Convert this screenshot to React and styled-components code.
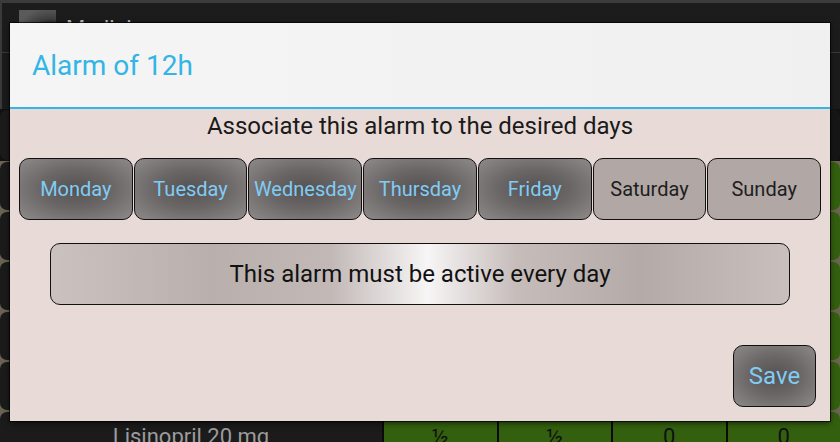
import React from 'react';
import styled, { createGlobalStyle, css } from 'styled-components';

const GlobalStyle = createGlobalStyle`
    * {
        box-sizing: border-box;
    }
    html, body {
        margin: 0;
        padding: 0;
        background: #111;
        font-family: Roboto, 'Liberation Sans', sans-serif;
    }
`;

const days = [
    { label: 'Monday', active: true },
    { label: 'Tuesday', active: true },
    { label: 'Wednesday', active: true },
    { label: 'Thursday', active: true },
    { label: 'Friday', active: true },
    { label: 'Saturday', active: false },
    { label: 'Sunday', active: false },
];

// rows of the medicine table behind the dialog; only the last one peeks out
const rows = [
    { name: '', doses: ['', '', '', ''] },
    { name: '', doses: ['', '', '', ''] },
    { name: '', doses: ['', '', '', ''] },
    { name: '', doses: ['', '', '', ''] },
    { name: '', doses: ['', '', '', ''] },
    { name: 'Lisinopril 20 mg', doses: ['½', '½', '0', '0'] },
];

const App = () => {
    return (
        <>
            <GlobalStyle />
            <Screen>
                <Backdrop>
                    <TopBar>
                        <Thumb />
                        <AppTitle>Medicines</AppTitle>
                    </TopBar>
                    <SubBar />
                    <HeaderRow>
                        <NameCell />
                        <HeadCell />
                        <HeadCell />
                        <HeadCell />
                        <HeadCell />
                    </HeaderRow>
                    {rows.map((row, r) => (
                        <TableRow key={r}>
                            <NameCell>{row.name}</NameCell>
                            {row.doses.map((d, i) => (
                                <DoseCell key={i}>{d}</DoseCell>
                            ))}
                        </TableRow>
                    ))}
                </Backdrop>

                <Dialog>
                    <DialogTitle>Alarm of 12h</DialogTitle>
                    <DialogBody>
                        <Hint>Associate this alarm to the desired days</Hint>
                        <DayRow>
                            {days.map((day) => (
                                <DayButton key={day.label} $active={day.active}>
                                    {day.label}
                                </DayButton>
                            ))}
                        </DayRow>
                        <EveryDayButton>
                            This alarm must be active every day
                        </EveryDayButton>
                        <SaveButton>Save</SaveButton>
                    </DialogBody>
                </Dialog>
            </Screen>
        </>
    );
};

export default App;

const Screen = styled.div`
    position: relative;
    width: 840px;
    height: 442px;
    overflow: hidden;
    background: #141414;
`;

const Backdrop = styled.div`
    display: flex;
    flex-direction: column;
`;

const TopBar = styled.div`
    display: flex;
    align-items: flex-start;
    gap: 10px;
    height: 53px;
    padding: 7px 0 0 17px;
    background: #1c1c1c;
    border-top: 3px solid #3c3c3c;
    border-left: 2px solid #3a3a3a;
    border-bottom: 1px solid #3a3a3a;
`;

const Thumb = styled.div`
    width: 37px;
    height: 37px;
    background: radial-gradient(circle at 85% 95%, #4a4a4a 35%, #151515 42%, #3e3e3e 55%, #5a5a5a 80%);
`;

const AppTitle = styled.div`
    color: #bbb;
    font-size: 22px;
    padding-top: 6px;
`;

const SubBar = styled.div`
    height: 56px;
    background: #1b1b1b;
    border-left: 2px solid #3a3a3a;
`;

const TableRow = styled.div`
    display: grid;
    grid-template-columns: 382px repeat(4, 1fr);
    height: 50px;
    background: #6a6352;
`;

const HeaderRow = styled(TableRow)`
    height: 52px;
    background: #111;
`;

const cellBase = css`
    display: flex;
    align-items: center;
    justify-content: center;
    border-radius: 7px;
    font-size: 22px;
`;

const NameCell = styled.div`
    ${cellBase};
    background: #1b1b1b;
    color: #9c9c9c;
    margin: 1px 0;
`;

const HeadCell = styled.div`
    ${cellBase};
    background: #161616;
    border-left: 2px solid #000;
`;

const DoseCell = styled.div`
    ${cellBase};
    background: #33600e;
    color: #111;
    border-left: 2px solid #0a0a0a;
    margin: 1px 0;
`;

const Dialog = styled.div`
    position: absolute;
    top: 23px;
    left: 10px;
    width: 820px;
    height: 398px;
    display: flex;
    flex-direction: column;
    box-shadow: 0 0 0 1px rgba(0, 0, 0, 0.7), 0 2px 6px rgba(0, 0, 0, 0.6);
`;

const DialogTitle = styled.div`
    display: flex;
    align-items: center;
    height: 86px;
    padding-left: 22px;
    background: linear-gradient(to right, #f5f5f5, #f0f0f0);
    border-bottom: 2px solid #33b5e5;
    color: #33b5e5;
    font-size: 28px;
`;

const DialogBody = styled.div`
    flex: 1;
    display: flex;
    flex-direction: column;
    padding: 3px 9px 14px;
    background: #e8dad7;
`;

const Hint = styled.div`
    text-align: center;
    font-size: 24px;
    line-height: 28px;
    color: #1a1a1a;
`;

const DayRow = styled.div`
    display: flex;
    gap: 1px;
    margin-top: 18px;
`;

const darkButton = css`
    border: 1.5px solid #111;
    border-radius: 10px;
    background: radial-gradient(ellipse at center, #565252 0%, #6a6666 45%, #8e8a8a 100%);
    color: #80ccf5;
`;

const DayButton = styled.div`
    flex: 1;
    display: flex;
    align-items: center;
    justify-content: center;
    height: 62px;
    font-size: 20px;
    border: 1.5px solid #111;
    border-radius: 10px;
    ${({ $active }) =>
        $active
            ? darkButton
            : css`
                  background: #b1a7a5;
                  color: #1e1e1e;
              `}
`;

const EveryDayButton = styled.div`
    display: flex;
    align-items: center;
    justify-content: center;
    align-self: center;
    width: 740px;
    height: 62px;
    margin-top: 23px;
    border: 1.5px solid #111;
    border-radius: 10px;
    background: linear-gradient(
        to right,
        #cbc2c0 0%,
        #b9afad 22%,
        #c2b9b7 38%,
        #f7f5f5 51%,
        #c6bdbb 63%,
        #b4aaa8 80%,
        #c9c0be 100%
    );
    color: #111;
    font-size: 24px;
`;

const SaveButton = styled.div`
    ${darkButton};
    display: flex;
    align-items: center;
    justify-content: center;
    align-self: flex-end;
    width: 83px;
    height: 62px;
    margin: 40px 5px 0 0;
    font-size: 24px;
`;
